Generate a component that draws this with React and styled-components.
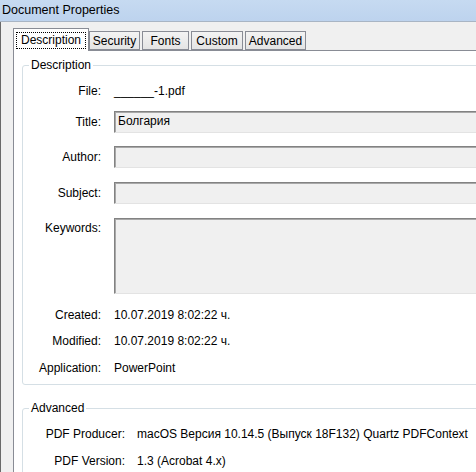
import React from 'react'
import styled, { createGlobalStyle } from 'styled-components'

const GlobalStyle = createGlobalStyle`
  html, body {
    margin: 0;
    padding: 0;
    background: #f0f0f0;
  }
  body {
    font-family: "Liberation Sans", Arial, sans-serif;
    font-size: 12px;
    color: #000;
  }
`

const Window = styled.div`
  width: 476px;
  height: 472px;
  overflow: hidden;
  background: #f0f0f0;
`

const TitleBar = styled.div`
  height: 21px;
  line-height: 20px;
  padding-left: 2px;
  font-size: 12.5px;
  background: linear-gradient(#c6daf1, #bdd3ee);
  border-bottom: 1px solid #a9b5c4;
  white-space: nowrap;
`

const Body = styled.div`
  display: flex;
  flex-direction: column;
  padding: 6px 0 0 12px;
  border-left: 1px solid #6a6a6a;
`

const TabStrip = styled.div`
  display: flex;
  align-items: flex-end;
  height: 22px;
  position: relative;
  z-index: 1;
`

const Tab = styled.div`
  box-sizing: border-box;
  width: ${p => p.$w}px;
  height: ${p => (p.$active ? 23 : 19)}px;
  margin-right: ${p => (p.$active ? 0 : 2)}px;
  margin-bottom: ${p => (p.$active ? -1 : 0)}px;
  border: 1px solid #898c95;
  border-bottom: ${p => (p.$active ? 'none' : '1px solid #898c95')};
  background: ${p => (p.$active ? '#fff' : 'linear-gradient(#f3f3f3, #e4e4e4)')};
  display: flex;
  align-items: ${p => (p.$active ? 'flex-start' : 'center')};
  justify-content: center;
  padding-top: ${p => (p.$active ? 3 : 0)}px;
  white-space: nowrap;
`

const FocusLabel = styled.span`
  display: block;
  box-sizing: border-box;
  width: 70px;
  height: 17px;
  line-height: 15px;
  text-align: center;
  border: 1px dotted #000;
`

const Panel = styled.div`
  width: 540px;
  height: 430px;
  background: #fff;
  border: 1px solid #898c95;
  padding: 7px 0 0 8px;
`

const GroupBox = styled.fieldset`
  margin: 0 0 ${p => p.$mb || 0}px 0;
  padding: ${p => p.$pt}px 0 ${p => p.$pb}px 0;
  border: 1px solid #d5dfe5;
  border-radius: 3px;
  width: 510px;
  min-width: 0;
`

const Legend = styled.legend`
  padding: 0 2px;
  margin-left: 6px;
  line-height: 14px;
  font-size: 12px;
`

const Row = styled.div`
  display: flex;
  align-items: ${p => (p.$top ? 'flex-start' : 'center')};
  min-height: 22px;
  margin-top: ${p => p.$mt || 0}px;
`

const Label = styled.div`
  width: ${p => p.$w}px;
  flex: none;
  text-align: right;
  padding-top: ${p => (p.$top ? 3 : 0)}px;
  white-space: nowrap;
`

const Value = styled.div`
  margin-left: ${p => p.$gap}px;
  white-space: nowrap;
`

const Field = styled.div`
  box-sizing: border-box;
  flex: 1;
  margin-left: 13px;
  height: ${p => p.$h || 22}px;
  background: #f0f0f0;
  border: 1px solid;
  border-color: #828282 #e3e3e3 #e3e3e3 #828282;
  box-shadow: inset 1px 1px #a8a8a8;
  padding: ${p => (p.$h ? 3 : 0)}px 0 0 3px;
  line-height: 19px;
  white-space: nowrap;
`

const tabs = [
  { name: 'Description', w: 76, active: true },
  { name: 'Security', w: 51 },
  { name: 'Fonts', w: 47 },
  { name: 'Custom', w: 52 },
  { name: 'Advanced', w: 61 },
]

export default function App() {
  return (
    <Window>
      <GlobalStyle />
      <TitleBar>Document Properties</TitleBar>
      <Body>
        <TabStrip>
          {tabs.map(t => (
            <Tab key={t.name} $w={t.w} $active={t.active}>
              {t.active ? <FocusLabel>{t.name}</FocusLabel> : t.name}
            </Tab>
          ))}
        </TabStrip>
        <Panel>
          <GroupBox $pt={8} $pb={5} $mb={16}>
            <Legend>Description</Legend>
            <Row>
              <Label $w={78}>File:</Label>
              <Value $gap={13}>______-1.pdf</Value>
            </Row>
            <Row $mt={9}>
              <Label $w={78}>Title:</Label>
              <Field>Болгария</Field>
            </Row>
            <Row $mt={13}>
              <Label $w={78}>Author:</Label>
              <Field />
            </Row>
            <Row $mt={14}>
              <Label $w={78}>Subject:</Label>
              <Field />
            </Row>
            <Row $mt={14} $top>
              <Label $w={78} $top>Keywords:</Label>
              <Field $h={76} />
            </Row>
            <Row $mt={10}>
              <Label $w={78}>Created:</Label>
              <Value $gap={13}>10.07.2019 8:02:22 ч.</Value>
            </Row>
            <Row $mt={4}>
              <Label $w={78}>Modified:</Label>
              <Value $gap={13}>10.07.2019 8:02:22 ч.</Value>
            </Row>
            <Row $mt={5}>
              <Label $w={78}>Application:</Label>
              <Value $gap={13}>PowerPoint</Value>
            </Row>
          </GroupBox>
          <GroupBox $pt={8} $pb={20}>
            <Legend>Advanced</Legend>
            <Row>
              <Label $w={102}>PDF Producer:</Label>
              <Value $gap={12}>macOS Версия 10.14.5 (Выпуск 18F132) Quartz PDFContext</Value>
            </Row>
            <Row $mt={5}>
              <Label $w={102}>PDF Version:</Label>
              <Value $gap={12}>1.3 (Acrobat 4.x)</Value>
            </Row>
          </GroupBox>
        </Panel>
      </Body>
    </Window>
  )
}
